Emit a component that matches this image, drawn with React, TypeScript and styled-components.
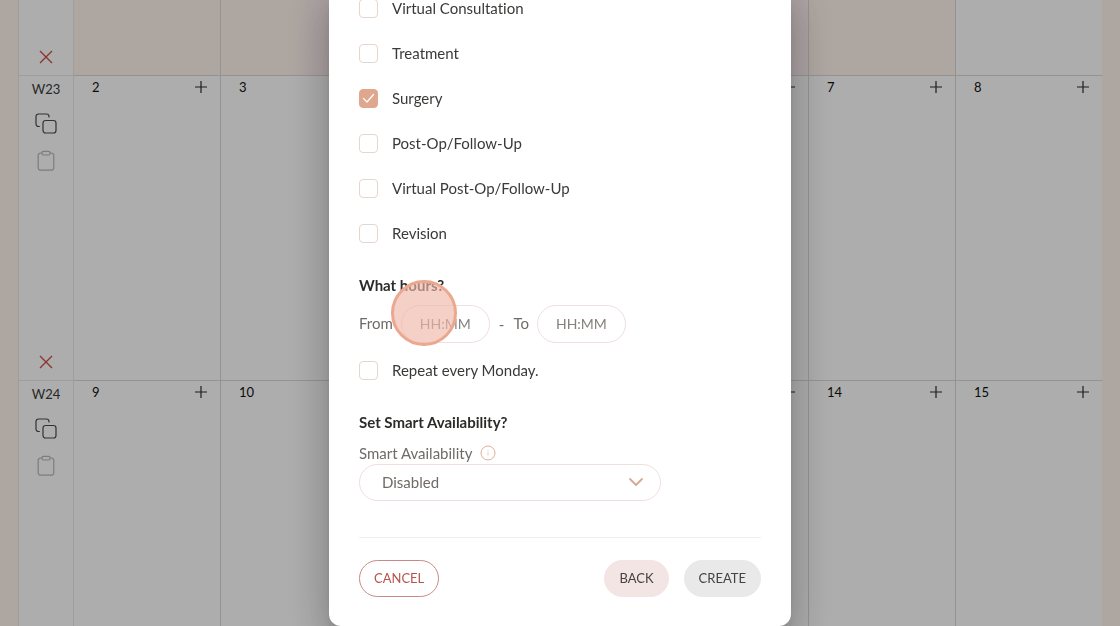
import React, { useState } from 'react';
import styled, { createGlobalStyle, css } from 'styled-components';

const GlobalStyle = createGlobalStyle`
  *, *::before, *::after { box-sizing: border-box; }
  body {
    margin: 0;
    background: #fff5ed;
    color: #3a3a38;
    font-family: Lato, "Liberation Sans", sans-serif;
    font-size: 15px;
    line-height: 22px;
    font-variant-ligatures: none;
  }
  button, input, select { font: inherit; color: inherit; }
`;

/* ---------- calendar ---------- */

const Page = styled.main`
  height: 100vh;
  overflow: hidden;
  padding: 0 17px 0 18px;
`;

const Week = styled.section<{ $partial?: boolean }>`
  display: grid;
  grid-template-columns: 56px repeat(7, 1fr);
  height: ${p => (p.$partial ? '76px' : '305px')};
`;

const WeekTools = styled.div<{ $partial?: boolean }>`
  display: flex;
  flex-direction: column;
  align-items: center;
  justify-content: ${p => (p.$partial ? 'flex-end' : 'flex-start')};
  gap: 15px;
  padding: 4px 0 11px;
  background: #fff;
  border: solid #efe6e6;
  border-width: 0 1px 1px;
`;

const WeekLabel = styled.span`
  font-size: 13px;
  line-height: 18px;
`;

const IconButton = styled.button<{ $push?: boolean }>`
  display: grid;
  place-items: center;
  padding: 0;
  border: 0;
  background: none;
  cursor: pointer;
  ${p => p.$push && css`margin-top: auto;`}
`;

const Day = styled.div<{ $tone?: 'past' | 'pastLeft' | 'pastRight' }>`
  display: flex;
  align-items: flex-start;
  justify-content: space-between;
  padding: 0 13px 0 18px;
  background: ${p => (p.$tone ? '#fff5ed' : '#fff')};
  ${p => p.$tone === 'pastLeft' && css`
    background: linear-gradient(90deg, #fff5ed 52%, #ffeff4 74%);
  `}
  ${p => p.$tone === 'pastRight' && css`
    background: linear-gradient(90deg, #ffeff4 88%, #fff2f2 100%);
  `}
  border: solid #dcd8d8;
  border-width: 0 1px 1px 0;
  &:last-child { border-right-color: #fff5ed; }
`;

const DayNumber = styled.span`
  color: #111;
  font-size: 13px;
  line-height: 22px;
`;

const AddButton = styled(IconButton)`
  height: 21px;
`;

/* ---------- dialog ---------- */

const Backdrop = styled.div`
  position: fixed;
  inset: 0;
  display: flex;
  align-items: flex-end;
  justify-content: center;
  overflow: hidden;
  background: rgba(0, 0, 0, 0.32);
`;

const Dialog = styled.form`
  flex: none;
  width: 462px;
  max-width: 100%;
  min-height: 100vh;
  padding: 0 30px 29px;
  background: #fff;
  border-radius: 12px;
  box-shadow:
    0 11px 15px -7px rgba(0, 0, 0, 0.2),
    0 24px 38px 3px rgba(0, 0, 0, 0.14),
    0 9px 46px 8px rgba(0, 0, 0, 0.12);
`;

const CheckRow = styled.label`
  display: flex;
  align-items: center;
  gap: 14px;
  height: 45px;
`;

const CheckText = styled.span`
  padding-bottom: 2px;
`;

const CheckHolder = styled.span`
  display: grid;
  place-items: center;
  > * { grid-area: 1 / 1; }
  svg { pointer-events: none; }
`;

const Box = styled.input`
  appearance: none;
  width: 19px;
  height: 19px;
  margin: 0;
  background: #fff;
  border: 1px solid #e6d6cc;
  border-radius: 4px;
  &:checked { background: #e0a78f; border-color: #e0a78f; }
`;

const Section = styled.section`
  margin-top: 18px;
`;

const Heading = styled.h2`
  margin: 0 0 9px;
  color: #2b2b29;
  font-size: 15px;
  font-weight: 700;
  line-height: 22px;
`;

const Hours = styled.div`
  position: relative;
  display: flex;
  align-items: center;
  gap: 9px;
  margin-bottom: 5px;
  color: #6f6b68;
`;

const HourLabel = styled.label`
  display: flex;
  align-items: center;
  gap: 8px;
`;

const TimeInput = styled.input`
  width: 89px;
  height: 38px;
  padding: 0 12px 2px 18px;
  background: #fff;
  font-size: 14px;
  border: 1px solid #eee0dd;
  border-radius: 19px;
  &::placeholder { color: #85817e; opacity: 1; }
`;

const Tap = styled.span`
  position: absolute;
  top: -25px;
  left: 32px;
  width: 66px;
  height: 66px;
  background: rgba(240, 183, 167, 0.65);
  border: 3px solid #eba88f;
  border-radius: 50%;
  pointer-events: none;
`;

const FieldLabel = styled.div`
  display: flex;
  align-items: center;
  gap: 8px;
  color: #6f6b68;
`;

const SelectHolder = styled.div`
  display: grid;
  align-items: center;
  width: 302px;
  max-width: 100%;
  > * { grid-area: 1 / 1; }
  svg { justify-self: end; margin: 0 17px 2px 0; pointer-events: none; }
`;

const Select = styled.select`
  appearance: none;
  width: 100%;
  height: 37px;
  padding: 0 40px 2px 22px;
  background: #fff;
  color: #6f6b68;
  border: 1px solid #eee0dd;
  border-radius: 19px;
`;

const Actions = styled.footer`
  display: flex;
  gap: 15px;
  margin-top: 36px;
  padding-top: 22px;
  border-top: 1px solid #f0eeee;
`;

const tones = {
  outline: css`background: #fff; color: #b5544c; border-color: #c98a84; margin-right: auto;`,
  blush: css`background: #f3e5e3; border-color: #f3e5e3;`,
  grey: css`background: #e9e9e9; border-color: #e9e9e9;`,
};

const Action = styled.button<{ $tone: keyof typeof tones }>`
  height: 37px;
  padding: 0 14px 2px;
  color: #454341;
  font-size: 13px;
  border: 1px solid;
  border-radius: 19px;
  cursor: pointer;
  ${p => tones[p.$tone]}
`;

/* ---------- icons ---------- */

const Cross = () => (
  <svg width="14" height="14" viewBox="0 0 14 14" fill="none" stroke="#cf4a42" strokeWidth="1.3">
    <path d="M1 1l12 12M13 1L1 13" />
  </svg>
);

const Plus = () => (
  <svg width="12" height="12" viewBox="0 0 12 12" fill="none" stroke="#2b2b2b" strokeWidth="1.2">
    <path d="M6 0v12M0 6h12" />
  </svg>
);

const Copy = () => (
  <svg width="22" height="22" viewBox="0 0 22 22" fill="none" stroke="#4a4a4a" strokeWidth="1.2" strokeLinecap="round">
    <rect x="8" y="7.500" width="13" height="12.500" rx="2.5" />
    <path d="M4.4 13.500H3.500A2.500 2.500 0 0 1 1 11V3.500A2.500 2.500 0 0 1 3.500 1H11.500A2.500 2.500 0 0 1 14 3.500V4" />
  </svg>
);

const Clipboard = () => (
  <svg width="18" height="22" viewBox="0 0 18 22" fill="none" stroke="#b8b8b8" strokeWidth="1.2">
    <path d="M5 3H3.700A2.500 2.500 0 0 0 1.200 5.500V17.700A2.500 2.500 0 0 0 3.700 20.200H14.300A2.500 2.500 0 0 0 16.800 17.700V5.500A2.500 2.500 0 0 0 14.300 3H13" />
    <rect x="5" y="1.400" width="8" height="3.600" rx="1.400" />
  </svg>
);

const Tick = () => (
  <svg width="13" height="11" viewBox="0 0 13 11" fill="none" stroke="#fff" strokeWidth="1.2" strokeLinecap="round" strokeLinejoin="round">
    <path d="M1.500 5.500L5 9L11.500 1.500" />
  </svg>
);

const Info = () => (
  <svg width="16" height="16" viewBox="0 0 16 16" fill="none" stroke="#dfb09c" strokeWidth="1">
    <circle cx="8" cy="8" r="7" />
    <path d="M8 7.200V10.500M8 5V6" strokeOpacity="0.7" />
  </svg>
);

const Chevron = () => (
  <svg width="16" height="10" viewBox="0 0 16 10" fill="none" stroke="#dba791" strokeWidth="1.800" strokeLinecap="round" strokeLinejoin="round">
    <path d="M2 2l6 6 6-6" />
  </svg>
);

/* ---------- content ---------- */

const weeks = [
  { label: 'W23', days: [2, 3, 4, 5, 6, 7, 8] },
  { label: 'W24', days: [9, 10, 11, 12, 13, 14, 15] },
];

const pastDays = ['past', 'pastLeft', 'past', 'past', 'pastRight', 'past'] as const;

const appointmentTypes = [
  'Virtual Consultation',
  'Treatment',
  'Surgery',
  'Post-Op/Follow-Up',
  'Virtual Post-Op/Follow-Up',
  'Revision',
];

function Checkbox({ label, initial = false }: { label: string; initial?: boolean }) {
  const [checked, setChecked] = useState(initial);
  return (
    <CheckRow>
      <CheckHolder>
        <Box type="checkbox" checked={checked} onChange={e => setChecked(e.target.checked)} />
        {checked && <Tick />}
      </CheckHolder>
      <CheckText>{label}</CheckText>
    </CheckRow>
  );
}

export default function App() {
  return (
    <>
      <GlobalStyle />
      <Page>
        <Week $partial>
          <WeekTools $partial>
            <IconButton aria-label="Clear week"><Cross /></IconButton>
          </WeekTools>
          {pastDays.map((tone, i) => <Day key={i} $tone={tone} />)}
          <Day />
        </Week>
        {weeks.map(week => (
          <Week key={week.label}>
            <WeekTools>
              <WeekLabel>{week.label}</WeekLabel>
              <IconButton aria-label="Copy week"><Copy /></IconButton>
              <IconButton aria-label="Paste week"><Clipboard /></IconButton>
              <IconButton $push aria-label="Clear week"><Cross /></IconButton>
            </WeekTools>
            {week.days.map(day => (
              <Day key={day}>
                <DayNumber>{day}</DayNumber>
                <AddButton aria-label={`Add on day ${day}`}><Plus /></AddButton>
              </Day>
            ))}
          </Week>
        ))}
      </Page>

      <Backdrop>
        <Dialog role="dialog" aria-label="Availability" onSubmit={e => e.preventDefault()}>
          {appointmentTypes.map(type => (
            <Checkbox key={type} label={type} initial={type === 'Surgery'} />
          ))}

          <Section>
            <Heading>What hours?</Heading>
            <Hours>
              <HourLabel><CheckText>From</CheckText><TimeInput placeholder="HH:MM" /></HourLabel>
              <span>-</span>
              <HourLabel><CheckText>To</CheckText><TimeInput placeholder="HH:MM" /></HourLabel>
              <Tap />
            </Hours>
            <Checkbox label="Repeat every Monday." />
          </Section>

          <Section>
            <Heading>Set Smart Availability?</Heading>
            <FieldLabel>
              <label htmlFor="smart">Smart Availability</label>
              <Info />
            </FieldLabel>
            <SelectHolder>
              <Select id="smart" defaultValue="Disabled">
                <option>Disabled</option>
                <option>Enabled</option>
              </Select>
              <Chevron />
            </SelectHolder>
          </Section>

          <Actions>
            <Action type="button" $tone="outline">CANCEL</Action>
            <Action type="button" $tone="blush">BACK</Action>
            <Action type="submit" $tone="grey">CREATE</Action>
          </Actions>
        </Dialog>
      </Backdrop>
    </>
  );
}
